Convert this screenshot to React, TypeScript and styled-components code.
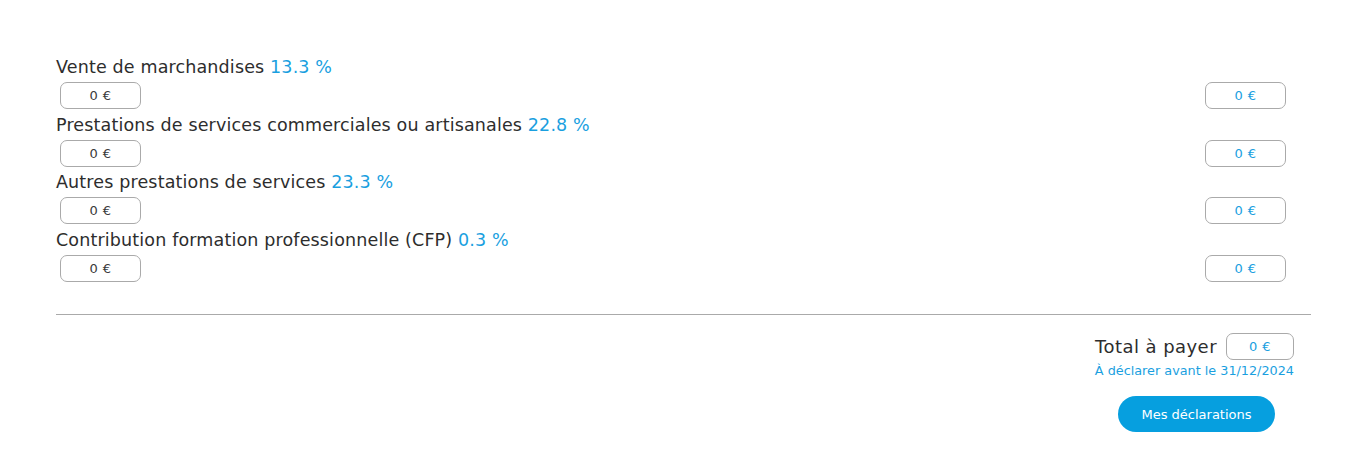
import React from "react";
import styled, { createGlobalStyle } from "styled-components";

const Global = createGlobalStyle`
  html, body { margin: 0; padding: 0; background: #fff; }
  body { font-family: "DejaVu Sans", "Open Sans", sans-serif; color: #2d2d2d; }
`;

const Page = styled.div`
  padding: 55px 40px 0 56px;
  width: 1255px;
`;

const Section = styled.div`
  display: flex;
  flex-direction: column;
`;

const Row = styled.div`
  display: flex;
  flex-direction: column;
  height: 57.5px;
`;

const Label = styled.div`
  font-size: 17.5px;
  letter-spacing: 0.15px;
  line-height: 24px;
  color: #2d2d2d;
  white-space: nowrap;
`;

const Rate = styled.span`
  color: #1a9fdf;
`;

const InputsLine = styled.div`
  display: flex;
  justify-content: space-between;
  padding: 3px 25px 0 4px;
`;

const Amount = styled.div<{ $blue?: boolean; $w?: number }>`
  box-sizing: border-box;
  width: ${(p) => p.$w ?? 81}px;
  height: 27px;
  border: 1px solid #aaa;
  border-radius: 7px;
  display: flex;
  align-items: center;
  justify-content: center;
  font-size: 13px;
  letter-spacing: 0.4px;
  color: ${(p) => (p.$blue ? "#1a9fdf" : "#3a3a3a")};
`;

const Divider = styled.hr`
  border: none;
  border-top: 1px solid #aaa;
  margin: 29px 0 0 0;
  width: 1255px;
`;

const Summary = styled.div`
  display: flex;
  flex-direction: column;
  align-items: flex-end;
  padding-right: 17px;
  padding-top: 18px;
`;

const TotalLine = styled.div`
  display: flex;
  align-items: center;
  gap: 9px;
  height: 27px;
`;

const TotalLabel = styled.span`
  font-size: 18px;
  letter-spacing: 0.45px;
  line-height: 24px;
  color: #2d2d2d;
`;

const Deadline = styled.div`
  font-size: 12.8px;
  line-height: 16px;
  color: #1a9fdf;
  margin-top: 3px;
`;

const Button = styled.button`
  margin-top: 17px;
  margin-right: 19px;
  width: 157px;
  height: 36px;
  border: none;
  border-radius: 18px;
  background: #069fdf;
  color: #fff;
  font-family: inherit;
  font-size: 13px;
  cursor: pointer;
`;

const rows = [
  { label: "Vente de marchandises", rate: "13.3 %" },
  { label: "Prestations de services commerciales ou artisanales", rate: "22.8 %" },
  { label: "Autres prestations de services", rate: "23.3 %" },
  { label: "Contribution formation professionnelle (CFP)", rate: "0.3 %" },
];

export default function App() {
  return (
    <>
      <Global />
      <Page>
        <Section>
          {rows.map((r) => (
            <Row key={r.label}>
              <Label>
                {r.label} <Rate>{r.rate}</Rate>
              </Label>
              <InputsLine>
                <Amount>0 €</Amount>
                <Amount $blue>0 €</Amount>
              </InputsLine>
            </Row>
          ))}
        </Section>
        <Divider />
        <Summary>
          <TotalLine>
            <TotalLabel>Total à payer</TotalLabel>
            <Amount $blue $w={68}>0 €</Amount>
          </TotalLine>
          <Deadline>À déclarer avant le 31/12/2024</Deadline>
          <Button>Mes déclarations</Button>
        </Summary>
      </Page>
    </>
  );
}
